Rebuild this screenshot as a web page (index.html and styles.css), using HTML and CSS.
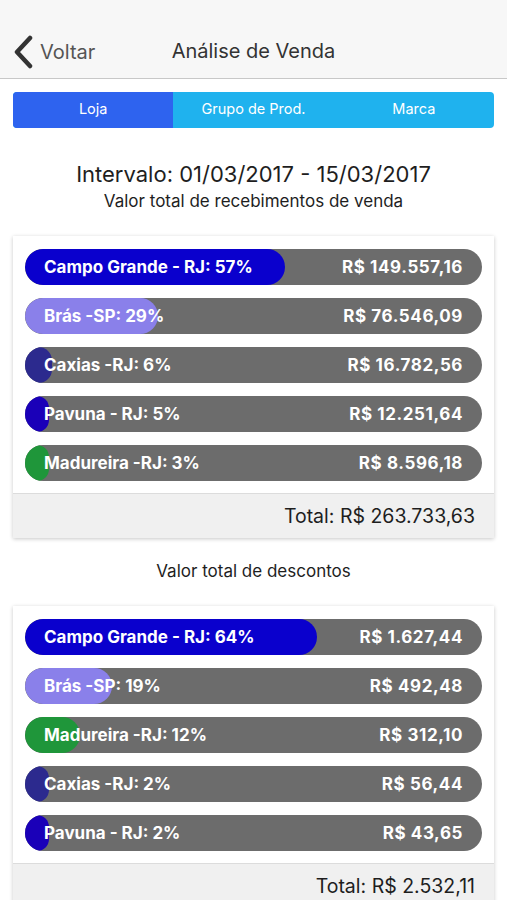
FILE: index.html
```html
<!DOCTYPE html>
<html>
<head>
<meta charset="UTF-8">
<title>Análise de Venda</title>
<link rel="stylesheet" href="styles.css">
</head>
<body>
<!-- barra de navegação -->
<div class="navbar">
	<div class="back">
		<svg class="chev" width="22" height="34" viewBox="0 0 22 34"><path d="M18 3 L5 17 L18 31" fill="none" stroke="#333" stroke-width="4.5" stroke-linecap="round" stroke-linejoin="round"/></svg>
		<span>Voltar</span>
	</div>
	<div class="title">Análise de Venda</div>
</div>

<div class="segment">
	<div class="seg active">Loja</div>
	<div class="seg">Grupo de Prod.</div>
	<div class="seg">Marca</div>
</div>

<div class="interval">Intervalo: 01/03/2017 - 15/03/2017</div>
<div class="subtitle">Valor total de recebimentos de venda</div>

<div class="card">
	<div class="bars">
		<div class="bar"><div class="fill c1" style="width:57%"></div><span class="lbl">Campo Grande - RJ: 57%</span><span class="val">R$ 149.557,16</span></div>
		<div class="bar"><div class="fill c2" style="width:29%"></div><span class="lbl">Brás -SP: 29%</span><span class="val">R$ 76.546,09</span></div>
		<div class="bar"><div class="fill c3" style="width:6%"></div><span class="lbl">Caxias -RJ: 6%</span><span class="val">R$ 16.782,56</span></div>
		<div class="bar"><div class="fill c4" style="width:5%"></div><span class="lbl">Pavuna - RJ: 5%</span><span class="val">R$ 12.251,64</span></div>
		<div class="bar"><div class="fill c5" style="width:3%"></div><span class="lbl">Madureira -RJ: 3%</span><span class="val">R$ 8.596,18</span></div>
	</div>
	<div class="total">Total: R$ 263.733,63</div>
</div>

<div class="subtitle second">Valor total de descontos</div>

<div class="card">
	<div class="bars">
		<div class="bar"><div class="fill c1" style="width:64%"></div><span class="lbl">Campo Grande - RJ: 64%</span><span class="val">R$ 1.627,44</span></div>
		<div class="bar"><div class="fill c2" style="width:19%"></div><span class="lbl">Brás -SP: 19%</span><span class="val">R$ 492,48</span></div>
		<div class="bar"><div class="fill c5" style="width:12%"></div><span class="lbl">Madureira -RJ: 12%</span><span class="val">R$ 312,10</span></div>
		<div class="bar"><div class="fill c3" style="width:2%"></div><span class="lbl">Caxias -RJ: 2%</span><span class="val">R$ 56,44</span></div>
		<div class="bar"><div class="fill c4" style="width:2%"></div><span class="lbl">Pavuna - RJ: 2%</span><span class="val">R$ 43,65</span></div>
	</div>
	<div class="total">Total: R$ 2.532,11</div>
</div>
</body>
</html>
```
FILE: styles.css
```css
body{
	margin: 0;
	background: #fff;
	font-family: Inter, "Liberation Sans", sans-serif;
	color: #222;
	overflow: hidden;
}

.navbar{
	height: 78px;
	background: #f7f7f7;
	border-bottom: 1px solid #c8c8c8;
	position: relative;
	display: flex;
	align-items: flex-end;
	justify-content: center;
}
.back{
	position: absolute;
	left: 12px;
	top: 35px;
	display: flex;
	align-items: center;
	gap: 6px;
	font-size: 20px;
	color: #555;
}
.title{
	font-size: 20px;
	color: #333;
	padding-bottom: 15px;
}

.segment{
	margin: 13px 13px 0 13px;
	height: 36px;
	display: flex;
	border-radius: 4px;
	overflow: hidden;
	background: #1fb2ee;
}
.seg{
	flex: 1;
	display: flex;
	align-items: center;
	justify-content: center;
	color: #fff;
	font-size: 14.5px;
	padding-bottom: 3px;
}
.seg.active{
	background: #2e63ef;
}

.interval{
	text-align: center;
	font-size: 22px;
	color: #1e1e1e;
	margin-top: 33px;
}
.subtitle{
	text-align: center;
	font-size: 17px;
	color: #1e1e1e;
	margin-top: 4px;
}
.subtitle.second{
	margin-top: 23px;
}

.card{
	margin: 25px 13px 0 13px;
	background: #fff;
	box-shadow: 0 1px 4px rgba(0,0,0,0.22);
}
.bars{
	padding: 13px 12px 12px 12px;
	display: flex;
	flex-direction: column;
	gap: 13px;
}
.bar{
	position: relative;
	height: 36px;
	border-radius: 18px;
	background: #6c6c6c;
	display: flex;
	align-items: center;
	justify-content: space-between;
	padding: 0 19px;
	overflow: hidden;
	color: #fff;
	font-weight: 700;
	font-size: 17px;
}
.fill{
	position: absolute;
	left: 0;
	top: 0;
	bottom: 0;
	min-width: 24px;
	border-radius: 18px;
}
.lbl, .val{
	position: relative;
}
.val{
	letter-spacing: 0.6px;
}
.c1{ background: #0a00cd; }
.c2{ background: #8a80ea; }
.c3{ background: #2c2a8e; }
.c4{ background: #1a00b8; }
.c5{ background: #1f963a; }

.total{
	background: #f0f0f0;
	border-top: 1px solid #dcdcdc;
	height: 44px;
	display: flex;
	align-items: center;
	justify-content: flex-end;
	padding-right: 19px;
	font-size: 19.5px;
	color: #1e1e1e;
}
```
